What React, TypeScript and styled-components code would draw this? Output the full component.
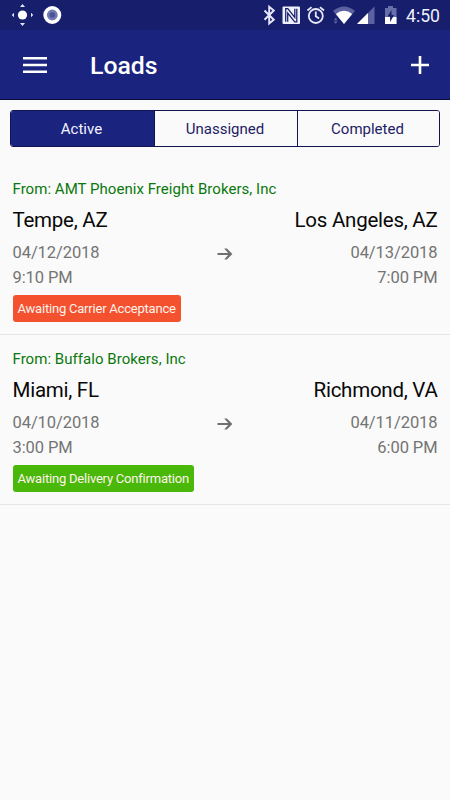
import React from "react";
import styled, { createGlobalStyle } from "styled-components";

const GlobalStyle = createGlobalStyle`
  * { box-sizing: border-box; }
  body { margin: 0; background: #fafafa; font-family: Roboto, "Liberation Sans", sans-serif; }
`;

const Screen = styled.div`
  width: 450px;
  height: 800px;
  display: flex;
  flex-direction: column;
  background: #fafafa;
  overflow: hidden;
`;

const StatusBar = styled.div`
  height: 30px;
  flex: none;
  display: flex;
  justify-content: space-between;
  background: #171e6c;
`;

const StatusIcons = styled.svg`
  display: block;
  height: 30px;
`;

const StatusRight = styled.div`
  display: flex;
`;

const Clock = styled.span`
  width: 44px;
  color: #eef0fb;
  font-size: 17.6px;
  line-height: 32px;
  white-space: nowrap;
`;

const AppBar = styled.header`
  height: 70px;
  flex: none;
  display: flex;
  align-items: center;
  padding: 0 21px 0 23px;
  background: #1a237e;
  border-bottom: 1px solid #090c3c;
`;

const IconButton = styled.button`
  display: flex;
  padding: 0;
  border: 0;
  background: none;
`;

const Title = styled.h1`
  flex: 1;
  margin: 2px 0 0 43px;
  color: #fff;
  font-size: 24.8px;
  line-height: 30px;
  font-weight: 500;
`;

const Tabs = styled.div`
  display: grid;
  grid-template-columns: 143px 143px 1fr;
  flex: none;
  height: 37px;
  margin: 10px 10px 18px;
  border: 1px solid #10144f;
  border-radius: 3px;
  overflow: hidden;
`;

const Tab = styled.button<{ $active?: boolean }>`
  padding: 1px 2px 0 0;
  border: 0;
  border-left: ${(p) => (p.$active ? "0" : "1px solid #10144f")};
  background: ${(p) => (p.$active ? "#1a237e" : "#fafafa")};
  color: ${(p) => (p.$active ? "#f2f3ff" : "#1d2166")};
  font: 400 15px Roboto, sans-serif;
`;

const LoadCard = styled.article`
  flex: none;
  height: 170px;
  padding: 14px 12.5px 0;
  border-bottom: 1px solid #e6e6e6;
`;

const Broker = styled.div`
  color: #0a780c;
  font-size: 15px;
  line-height: 20px;
  letter-spacing: 0.04px;
`;

const Route = styled.div`
  display: grid;
  grid-template-columns: 1fr 18px 1fr;
  margin-top: 7px;
`;

const Stop = styled.div<{ $end?: boolean }>`
  text-align: ${(p) => (p.$end ? "right" : "left")};
  white-space: nowrap;
`;

const City = styled.div`
  color: #080808;
  font-size: 20.5px;
  line-height: 28px;
  letter-spacing: -0.25px;
`;

const When = styled.div`
  color: #747474;
  font-size: 16.5px;
  line-height: 25px;
  letter-spacing: -0.08px;
  &:nth-child(2) { margin-top: 6px; }
`;

const Arrow = styled.svg`
  display: block;
  margin-top: 39px;
`;

const Badge = styled.span<{ $color: string }>`
  display: block;
  width: fit-content;
  height: 27px;
  margin-top: 5px;
  padding: 0 5px;
  border-radius: 3px;
  background: ${(p) => p.$color};
  color: #fff3ec;
  font-size: 13px;
  line-height: 27px;
  letter-spacing: -0.21px;
`;

const loads = [
  {
    broker: "AMT Phoenix Freight Brokers, Inc",
    from: ["Tempe, AZ", "04/12/2018", "9:10 PM"],
    to: ["Los Angeles, AZ", "04/13/2018", "7:00 PM"],
    status: "Awaiting Carrier Acceptance",
    color: "#f4512f",
  },
  {
    broker: "Buffalo Brokers, Inc",
    from: ["Miami, FL", "04/10/2018", "3:00 PM"],
    to: ["Richmond, VA", "04/11/2018", "6:00 PM"],
    status: "Awaiting Delivery Confirmation",
    color: "#49b808",
  },
];

function StopInfo({ data, end }: { data: string[]; end?: boolean }) {
  return (
    <Stop $end={end}>
      <City>{data[0]}</City>
      <When>{data[1]}</When>
      <When>{data[2]}</When>
    </Stop>
  );
}

export default function App() {
  return (
    <Screen>
      <GlobalStyle />
      <StatusBar>
        <StatusIcons width="70" viewBox="0 0 70 30">
          <circle cx="22.5" cy="15" r="4.6" fill="#fff" />
          <path d="M20 7l2.500-3 2.500 3zM20 23l2.500 3 2.500-3zM14 12.800L11.800 15l2.200 2.200zM31 12.800l2.200 2.200-2.200 2.200z" fill="#e4e6f6" />
          <circle cx="52.300" cy="15" r="7.200" fill="#7279b3" stroke="#fff" strokeWidth="3.600" />
          <circle cx="52.300" cy="15" r="2.800" fill="#4b5296" />
        </StatusIcons>
        <StatusRight>
          <StatusIcons width="146" viewBox="260 0 146 30">
            <path d="M264.500 10.500l9.300 9.200-4.600 3.800V6.800l4.600 3.700-9.300 9.200" fill="none" stroke="#e6e8f8" strokeWidth="1.900" />
            <rect x="282.500" y="6.500" width="17.500" height="17.500" rx="1" fill="#eef0fb" />
            <path d="M287.700 21.800V13l7 8.800h2.100V8.700M285.700 21.800V8.700h2.100l7 8.800V8.700" fill="none" stroke="#171e6c" strokeWidth="1.250" />
            <g fill="none" stroke="#e6e8f8" strokeWidth="1.800">
              <circle cx="315.800" cy="16" r="7" />
              <path d="M307.500 10.500l4-3.400M324 10.500l-4-3.400M315.800 11.500V16.200l3.300 2.200" />
            </g>
            <path d="M333 11q11-9 22 0L344 24z" fill="#5b629f" />
            <path d="M335.800 14q8.200-6.500 16.400 0L344 24z" fill="#fff" />
            <path d="M335.700 17.500l2 2.800h-4zM333.700 21.200h4l-2 2.800z" fill="#5b629f" />
            <path d="M374.500 6.500V24H357z" fill="#5b629f" />
            <path d="M368 13V24H357z" fill="#fff" />
            <path d="M385 8h3V6h5v2h3.500v16h-11.500z" fill="#686fa8" />
            <path d="M385 17h11.500v7h-11.500z" fill="#fff" />
            <path d="M391.500 10l-4 6.500h2.600v5.500l4-7h-2.600z" fill="#171e6c" />
          </StatusIcons>
          <Clock>4:50</Clock>
        </StatusRight>
      </StatusBar>
      <AppBar>
        <IconButton aria-label="Menu">
          <svg width="24" height="18" viewBox="0 0 24 18">
            <path d="M0 2.300h24M0 9h24M0 15.700h24" stroke="#fff" strokeWidth="2.600" />
          </svg>
        </IconButton>
        <Title>Loads</Title>
        <IconButton aria-label="Add load">
          <svg width="18" height="18" viewBox="0 0 18 18">
            <path d="M0 9h18M9 0v18" stroke="#fff" strokeWidth="2.600" />
          </svg>
        </IconButton>
      </AppBar>
      <Tabs>
        <Tab $active>Active</Tab>
        <Tab>Unassigned</Tab>
        <Tab>Completed</Tab>
      </Tabs>
      {loads.map((load) => (
        <LoadCard key={load.status}>
          <Broker>From: {load.broker}</Broker>
          <Route>
            <StopInfo data={load.from} />
            <Arrow width="18" height="18" viewBox="0 0 18 18">
              <path d="M1.500 8.100h10.600L8.200 3.400h2.700L16.400 9l-5.500 5.600H8.200l3.900-4.700H1.500z" fill="#707070" />
            </Arrow>
            <StopInfo data={load.to} end />
          </Route>
          <Badge $color={load.color}>{load.status}</Badge>
        </LoadCard>
      ))}
    </Screen>
  );
}
